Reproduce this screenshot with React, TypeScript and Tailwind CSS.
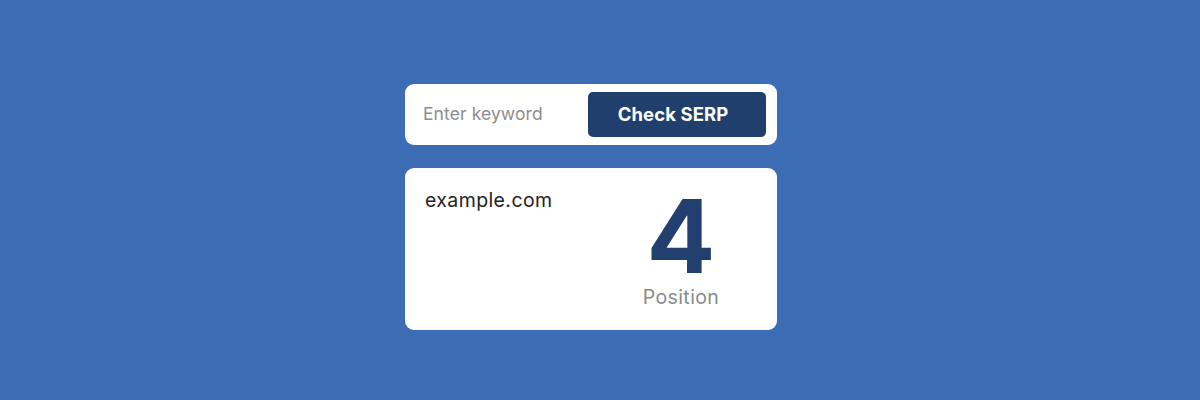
import React from "react";

export default function App() {
  return (
    <div
      className="w-[1200px] h-[400px] bg-[#3b6cb4] flex flex-col items-center pt-[84px] pr-[18px]"
      style={{ fontFamily: "Inter, 'Open Sans', sans-serif" }}
    >
      <div className="w-[372px] h-[61px] bg-white rounded-[9px] flex items-center justify-between pl-[18px] pr-[11px]">
        <input
          className="w-[150px] outline-none text-[17.5px] tracking-[0.005em] text-[#222] placeholder:text-[#8d8d8d] bg-transparent"
          placeholder="Enter keyword"
        />
        <button className="w-[178px] h-[45px] rounded-[5px] bg-[#213f6d] text-white font-bold text-[18.5px] tracking-[0.005em] pr-[8px]">
          Check SERP
        </button>
      </div>
      <div className="mt-[23px] w-[372px] h-[162px] bg-white rounded-[9px] flex justify-between pl-[20px] pr-[21px]">
        <div className="pt-[20px] text-[19.5px] tracking-[0.02em] leading-[24px] text-[#222]">example.com</div>
        <div className="w-[150px] flex flex-col items-center pt-[24px]">
          <div className="text-[102px] leading-[88px] font-bold text-[#223f6f]">4</div>
          <div className="mt-[5px] text-[19.5px] tracking-[0.02em] leading-[24px] text-[#8a8a8a]">Position</div>
        </div>
      </div>
    </div>
  );
}
